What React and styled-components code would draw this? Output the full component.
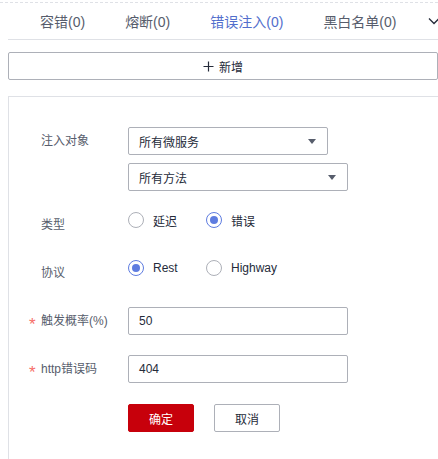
import React from "react";
import styled, { createGlobalStyle } from "styled-components";

const Global = createGlobalStyle`
  html, body {
    margin: 0;
    padding: 0;
    background: #fff;
    font-family: "Liberation Sans", Arial, "Noto Sans CJK SC", sans-serif;
    color: #252b3a;
  }
`;

const Page = styled.div`
  width: 438px;
  height: 459px;
  overflow: hidden;
  padding-top: 2px;
  box-sizing: border-box;
`;

const Dashed = styled.div`
  border-top: 1px dashed #dfe1e6;
`;

const TabBar = styled.div`
  display: flex;
  align-items: center;
  height: 36px;
  margin-left: 8px;
  padding-left: 32px;
  border-bottom: 1px solid #dfe1e6;
  position: relative;
`;

const Tab = styled.div`
  font-size: 14px;
  margin-right: 40px;
  color: ${(p) => (p.$active ? "#526ecc" : "#575d6c")};
  white-space: nowrap;
`;

const Chevron = styled.svg`
  position: absolute;
  right: -2px;
  top: 14px;
`;

const AddButton = styled.button`
  display: flex;
  align-items: center;
  justify-content: center;
  gap: 5px;
  width: 430px;
  height: 28px;
  margin: 12px 0 0 8px;
  border: 1px solid #adb0b8;
  border-radius: 2px;
  background: #fff;
  font: inherit;
  font-size: 12px;
  color: #252b3a;
  padding: 0;
`;

const Card = styled.div`
  margin: 16px 0 0 8px;
  border-top: 1px solid #dfe1e6;
  border-left: 1px solid #dfe1e6;
  padding-top: 30px;
  height: 400px;
`;

const Row = styled.div`
  display: flex;
  align-items: flex-start;
  margin-top: ${(p) => p.$gap || 0}px;
`;

const Label = styled.div`
  width: 119px;
  flex: none;
  box-sizing: border-box;
  padding-left: ${(p) => (p.$required ? 20 : 32)}px;
  padding-top: ${(p) => p.$shift || 0}px;
  line-height: 28px;
  font-size: 12px;
  color: #575d6c;
  white-space: nowrap;
`;

const Star = styled.span`
  display: inline-block;
  width: 12px;
  color: #f66f6a;
  font-size: 17px;
  line-height: 0;
  vertical-align: -5px;
`;

const Stack = styled.div`
  display: flex;
  flex-direction: column;
  gap: 8px;
`;

const Select = styled.div`
  display: flex;
  align-items: center;
  justify-content: space-between;
  box-sizing: border-box;
  width: ${(p) => p.$w}px;
  height: 28px;
  padding: 0 10px;
  border: 1px solid #adb0b8;
  border-radius: 2px;
  font-size: 12px;
  color: #252b3a;
`;

const Caret = styled.span`
  width: 0;
  height: 0;
  border-left: 4px solid transparent;
  border-right: 4px solid transparent;
  border-top: 5px solid #575d6c;
  margin-right: 1px;
`;

const Input = styled.div`
  box-sizing: border-box;
  width: 220px;
  height: 28px;
  line-height: 26px;
  padding: 0 10px;
  border: 1px solid #adb0b8;
  border-radius: 2px;
  font-size: 12px;
  color: #252b3a;
`;

const RadioGroup = styled.div`
  display: flex;
  align-items: center;
  height: 28px;
`;

const RadioItem = styled.label`
  display: flex;
  align-items: center;
  gap: 9px;
  width: 78px;
  font-size: 12px;
  color: #252b3a;
`;

const Circle = styled.span`
  box-sizing: border-box;
  width: 16px;
  height: 16px;
  border-radius: 50%;
  border: 1px solid ${(p) => (p.$on ? "#5e7ce0" : "#adb0b8")};
  display: flex;
  align-items: center;
  justify-content: center;
  &::after {
    content: "";
    width: 8px;
    height: 8px;
    border-radius: 50%;
    background: #5e7ce0;
    display: ${(p) => (p.$on ? "block" : "none")};
  }
`;

const Actions = styled.div`
  display: flex;
  gap: 20px;
  margin: 21px 0 0 119px;
`;

const Btn = styled.button`
  box-sizing: border-box;
  width: 66px;
  height: 28px;
  border-radius: 2px;
  font: inherit;
  font-size: 12px;
  padding: 0;
  border: 1px solid ${(p) => (p.$primary ? "#c7000b" : "#adb0b8")};
  background: ${(p) => (p.$primary ? "#c7000b" : "#fff")};
  color: ${(p) => (p.$primary ? "#fff" : "#252b3a")};
`;

const Radio = ({ on, children }) => (
  <RadioItem>
    <Circle $on={on} />
    {children}
  </RadioItem>
);

export default function App() {
  return (
    <Page>
      <Global />
      <Dashed />
      <TabBar>
        <Tab>容错(0)</Tab>
        <Tab>熔断(0)</Tab>
        <Tab $active>错误注入(0)</Tab>
        <Tab>黑白名单(0)</Tab>
        <Chevron width="12" height="8" viewBox="0 0 12 8">
          <polyline points="1,1.5 6,6.5 11,1.5" fill="none" stroke="#252b3a" strokeWidth="1.3" />
        </Chevron>
      </TabBar>
      <AddButton>
        <svg width="11" height="11" viewBox="0 0 11 11">
          <path d="M5.5 0.5v10M0.5 5.5h10" stroke="#252b3a" strokeWidth="1.2" />
        </svg>
        新增
      </AddButton>
      <Card>
        <Row>
          <Label>注入对象</Label>
          <Stack>
            <Select $w={200}>
              所有微服务
              <Caret />
            </Select>
            <Select $w={220}>
              所有方法
              <Caret />
            </Select>
          </Stack>
        </Row>
        <Row $gap={15}>
          <Label $shift={5}>类型</Label>
          <RadioGroup>
            <Radio>延迟</Radio>
            <Radio on>错误</Radio>
          </RadioGroup>
        </Row>
        <Row $gap={15}>
          <Label $shift={5}>协议</Label>
          <RadioGroup>
            <Radio on>Rest</Radio>
            <Radio>Highway</Radio>
          </RadioGroup>
        </Row>
        <Row $gap={20}>
          <Label $required>
            <Star>*</Star>触发概率(%)
          </Label>
          <Input>50</Input>
        </Row>
        <Row $gap={20}>
          <Label $required>
            <Star>*</Star>http错误码
          </Label>
          <Input>404</Input>
        </Row>
        <Actions>
          <Btn $primary>确定</Btn>
          <Btn>取消</Btn>
        </Actions>
      </Card>
    </Page>
  );
}
